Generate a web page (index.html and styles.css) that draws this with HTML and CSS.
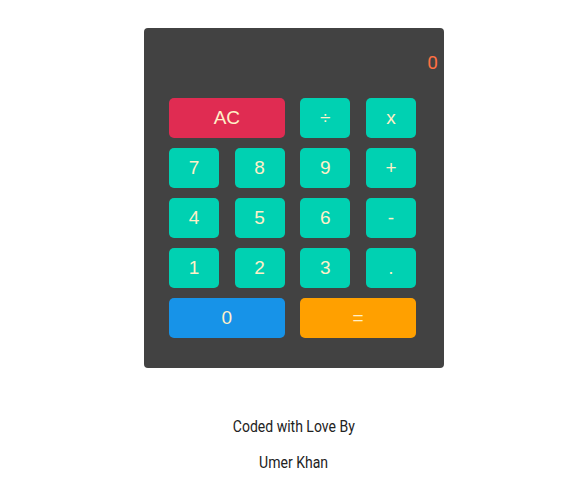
FILE: index.html
```html
<!DOCTYPE html>
<html>
<head>
<meta charset="utf-8">
<link rel="stylesheet" href="styles.css">
</head>
<body>
<div class="page">
  <div class="calc">
    <div class="display">0</div>
    <div class="keys">
      <button class="key red wide">AC</button>
      <button class="key">÷</button>
      <button class="key">x</button>
      <button class="key">7</button>
      <button class="key">8</button>
      <button class="key">9</button>
      <button class="key">+</button>
      <button class="key">4</button>
      <button class="key">5</button>
      <button class="key">6</button>
      <button class="key">-</button>
      <button class="key">1</button>
      <button class="key">2</button>
      <button class="key">3</button>
      <button class="key">.</button>
      <button class="key blue wide">0</button>
      <button class="key orange wide">=</button>
    </div>
  </div>
  <p class="credit first"><span class="condensed">Coded with Love By</span></p>
  <p class="credit"><span class="condensed">Umer Khan</span></p>
</div>
</body>
</html>
```
FILE: styles.css
```css
html, body { margin: 0; padding: 0; background: #fff; }
.page {
  display: flex;
  flex-direction: column;
  align-items: center;
  padding: 28px 0 0 13px;
}
.calc {
  width: 300px;
  height: 340px;
  box-sizing: border-box;
  background: #424242;
  border-radius: 4px;
  padding: 0 0 0 25px;
}
.display {
  height: 70px;
  box-sizing: border-box;
  padding: 24px 6px 0 0;
  text-align: right;
  font-family: Roboto, "Liberation Sans", sans-serif;
  font-size: 19px;
  line-height: 22px;
  color: #ff7043;
}
.keys {
  width: 247px;
  display: grid;
  grid-template-columns: repeat(4, 50px);
  grid-auto-rows: 40px;
  justify-content: space-between;
  row-gap: 10px;
}
.key {
  border: none;
  border-radius: 5px;
  background: #00d1b2;
  color: #fff0c8;
  font-family: "Liberation Sans", Arial, sans-serif;
  font-size: 19px;
  padding: 0;
  margin: 0;
}
.wide { grid-column: span 2; }
.red { background: #e02c52; }
.blue { background: #1793e8; }
.orange { background: #ffa000; }
.credit {
  margin: 16px 0 0;
  font-family: Roboto, "Liberation Sans", sans-serif;
  font-size: 16.5px;
  color: #222;
  line-height: 20px;
  text-align: center;
}
.credit.first { margin-top: 49px; }
.condensed {
  display: inline-block;
  transform: scaleX(0.85);
}
```
